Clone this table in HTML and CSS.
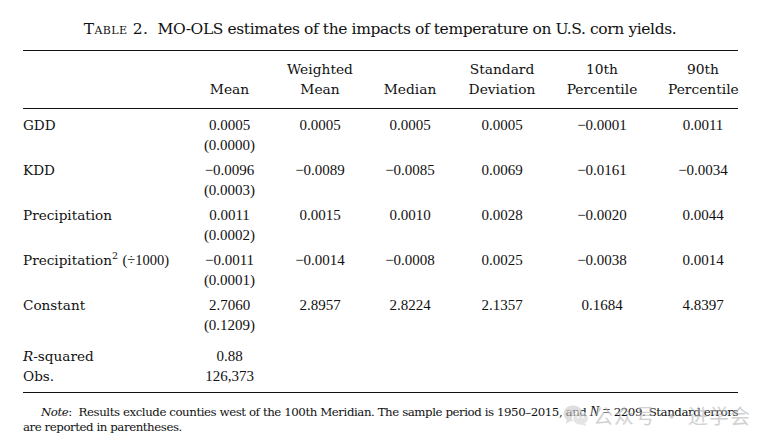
FILE: index.html
```html
<!DOCTYPE html>
<html lang="en">
<head>
<meta charset="utf-8">
<title>Table 2</title>
<link rel="stylesheet" href="styles.css">
</head>
<body>
<div class="page">
  <div class="caption"><span class="sc">Table 2.</span>&nbsp; MO-OLS estimates of the impacts of temperature on U.S. corn yields.</div>
  <div class="table">
    <div class="row head">
      <div class="lab"></div>
      <div class="c"><div>&nbsp;</div><div>Mean</div></div>
      <div class="c"><div>Weighted</div><div>Mean</div></div>
      <div class="c"><div>&nbsp;</div><div>Median</div></div>
      <div class="c"><div>Standard</div><div>Deviation</div></div>
      <div class="c"><div>10th</div><div>Percentile</div></div>
      <div class="c last"><div>90th</div><div>Percentile</div></div>
    </div>
    <div class="body">
      <div class="row data">
        <div class="lab">GDD</div>
        <div class="c n"><div>0.0005</div><div>(0.0000)</div></div>
        <div class="c n"><div>0.0005</div></div>
        <div class="c n"><div>0.0005</div></div>
        <div class="c n"><div>0.0005</div></div>
        <div class="c n"><div>&minus;0.0001</div></div>
        <div class="c n last"><div>0.0011</div></div>
      </div>
      <div class="row data">
        <div class="lab">KDD</div>
        <div class="c n"><div>&minus;0.0096</div><div>(0.0003)</div></div>
        <div class="c n"><div>&minus;0.0089</div></div>
        <div class="c n"><div>&minus;0.0085</div></div>
        <div class="c n"><div>0.0069</div></div>
        <div class="c n"><div>&minus;0.0161</div></div>
        <div class="c n last"><div>&minus;0.0034</div></div>
      </div>
      <div class="row data">
        <div class="lab">Precipitation</div>
        <div class="c n"><div>0.0011</div><div>(0.0002)</div></div>
        <div class="c n"><div>0.0015</div></div>
        <div class="c n"><div>0.0010</div></div>
        <div class="c n"><div>0.0028</div></div>
        <div class="c n"><div>&minus;0.0020</div></div>
        <div class="c n last"><div>0.0044</div></div>
      </div>
      <div class="row data">
        <div class="lab">Precipitation<sup>2</sup> <span class="num">(&divide;1000)</span></div>
        <div class="c n"><div>&minus;0.0011</div><div>(0.0001)</div></div>
        <div class="c n"><div>&minus;0.0014</div></div>
        <div class="c n"><div>&minus;0.0008</div></div>
        <div class="c n"><div>0.0025</div></div>
        <div class="c n"><div>&minus;0.0038</div></div>
        <div class="c n last"><div>0.0014</div></div>
      </div>
      <div class="row data">
        <div class="lab">Constant</div>
        <div class="c n"><div>2.7060</div><div>(0.1209)</div></div>
        <div class="c n"><div>2.8957</div></div>
        <div class="c n"><div>2.8224</div></div>
        <div class="c n"><div>2.1357</div></div>
        <div class="c n"><div>0.1684</div></div>
        <div class="c n last"><div>4.8397</div></div>
      </div>
      <div class="row stats">
        <div class="lab"><div><i>R</i>-squared</div><div>Obs.</div></div>
        <div class="c n"><div>0.88</div><div>126,373</div></div>
        <div class="c"></div>
        <div class="c"></div>
        <div class="c"></div>
        <div class="c"></div>
        <div class="c last"></div>
      </div>
    </div>
  </div>
  <p class="note"><i>Note</i>:&nbsp; Results exclude counties west of the 100th Meridian. The sample period is 1950&ndash;2015, and <i class="tm">N</i> <span class="tm">=</span> 2209. Standard errors are reported in parentheses.</p>
  <div class="watermark">
    <svg class="wm-icon" width="26" height="22" viewBox="0 0 26 22">
      <ellipse cx="10" cy="8.5" rx="9.5" ry="8" fill="#c9c9c9"/>
      <path d="M4 14 L3 19 L8 15.5 Z" fill="#c9c9c9"/>
      <ellipse cx="17.5" cy="13.5" rx="8" ry="6.8" fill="#d4d4d4" stroke="#fff" stroke-width="1.2"/>
      <path d="M22 18.5 L23.5 21.5 L19 19.5 Z" fill="#d4d4d4"/>
      <circle cx="6.8" cy="6.5" r="1.2" fill="#fff"/>
      <circle cx="12.8" cy="6.5" r="1.2" fill="#fff"/>
      <circle cx="15" cy="12.3" r="1" fill="#fff"/>
      <circle cx="20" cy="12.3" r="1" fill="#fff"/>
    </svg>
    <span class="wm-text">公众号 · 进学会</span>
  </div>
</div>
</body>
</html>
```

FILE: styles.css
```css
html, body {
  margin: 0;
  padding: 0;
  background: #fff;
}
body {
  width: 769px;
  height: 448px;
  overflow: hidden;
  color: #111;
  font-family: "DejaVu Serif", "Liberation Serif", serif;
}
.page {
  position: relative;
  width: 769px;
  height: 448px;
}
.caption {
  padding: 18px 9px 0 0;
  height: 40px;
  box-sizing: border-box;
  text-align: center;
  font-size: 15.5px;
  line-height: 22px;
  letter-spacing: -0.4px;
}
.sc {
  font-variant: small-caps;
  letter-spacing: 0.4px;
}
.table {
  margin: 10px 31px 0 23px;
  width: 715px;
  border-top: 1.5px solid #111;
  border-bottom: 1.5px solid #111;
}
.row {
  display: grid;
  grid-template-columns: 161px 91px 90px 90px 94px 106px 83px;
}
.head {
  padding: 9px 0 9px;
  border-bottom: 1.5px solid #111;
  font-size: 13.8px;
  line-height: 19.5px;
}
.c {
  text-align: center;
}
.c.last {
  padding-left: 13px;
}
.body {
  padding-top: 7px;
  padding-bottom: 6px;
}
.data {
  height: 45px;
}
.lab {
  font-size: 13.6px;
  line-height: 19.5px;
}
.n, .num {
  font-family: "Liberation Serif", "Times New Roman", serif;
  font-size: 15px;
  line-height: 19.5px;
}
.num {
  font-size: 14.5px;
}
sup {
  font-size: 9.5px;
  line-height: 0;
  vertical-align: 6px;
}
.stats {
  padding-top: 6px;
}
.note {
  margin: 11px 31px 0 23px;
  font-size: 11.8px;
  line-height: 15px;
  text-indent: 18px;
  letter-spacing: -0.45px;
  text-align: justify;
}
.tm {
  font-family: "Liberation Serif", serif;
  font-size: 14px;
  letter-spacing: 0;
}
.watermark {
  position: absolute;
  left: 563px;
  top: 404px;
  display: flex;
  align-items: center;
  gap: 4px;
  opacity: 0.6;
  pointer-events: none;
}
.wm-text {
  font-family: "Noto Sans CJK SC", sans-serif;
  font-size: 20px;
  line-height: 24px;
  color: #b4b4b4;
  letter-spacing: 1px;
}
```
